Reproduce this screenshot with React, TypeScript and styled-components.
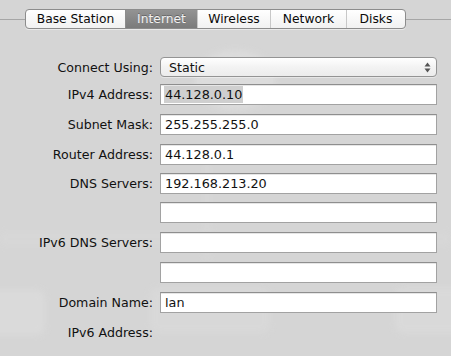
import React from "react";
import styled, { createGlobalStyle } from "styled-components";

const Global = createGlobalStyle`
  html, body { margin: 0; padding: 0; }
  body { background: #d5d5d5; font-family: "DejaVu Sans", "Lucida Grande", sans-serif; }
`;

const Page = styled.div`
  position: relative;
  width: 451px;
  height: 356px;
  overflow: hidden;
  background: #d5d5d5;
`;

const Backdrop = styled.svg`
  position: absolute;
  left: 0;
  top: 0;
  width: 451px;
  height: 356px;
  pointer-events: none;
`;

const Content = styled.div`
  position: relative;
  padding-top: 9px;
`;

const TabStrip = styled.div`
  display: flex;
  align-items: center;
  height: 20px;
  &::before, &::after {
    content: "";
    height: 1px;
    background: #a6a6a6;
    align-self: center;
  }
  &::before { width: 25px; }
  &::after { flex: 1; }
`;

const Tabs = styled.div`
  display: flex;
  height: 20px;
  border: 1px solid #8c8c8c;
  border-radius: 4px;
  overflow: hidden;
  box-sizing: border-box;
  background: linear-gradient(#ffffff, #f1f1f1);
  box-shadow: 0 1px 0 rgba(255,255,255,0.5);
`;

const Tab = styled.div<{ $active?: boolean; $w: number; $last?: boolean }>`
  width: ${p => p.$w}px;
  display: flex;
  align-items: center;
  justify-content: center;
  font-size: 12.3px;
  color: ${p => (p.$active ? "#f2f2f2" : "#0a0a0a")};
  background: ${p => (p.$active ? "linear-gradient(#939393, #7b7b7b)" : "transparent")};
  text-shadow: ${p => (p.$active ? "0 -1px 0 rgba(0,0,0,0.3)" : "none")};
  border-right: ${p => (p.$last ? "none" : "1px solid #c8c8c8")};
  box-sizing: border-box;
  &:first-child { border-right-color: #8c8c8c; }
`;

const Form = styled.div`
  display: grid;
  grid-template-columns: 153px 277px;
  column-gap: 7px;
  margin-top: 28px;
`;

const Label = styled.div<{ $gap: number }>`
  height: 21px;
  margin-bottom: ${p => p.$gap}px;
  display: flex;
  align-items: center;
  justify-content: flex-end;
  font-size: 12.6px;
  color: #111;
  white-space: nowrap;
`;

const Popup = styled.div`
  height: 20px;
  margin-bottom: 7px;
  box-sizing: border-box;
  border: 1px solid #949494;
  border-radius: 4px;
  background: linear-gradient(#ffffff, #f3f3f3 50%, #ececec);
  box-shadow: 0 1px 0 rgba(255,255,255,0.4);
  display: flex;
  align-items: center;
  justify-content: space-between;
  padding: 0 5px 0 8px;
  font-size: 12.6px;
  color: #111;
`;

const Arrows = styled.svg`
  width: 7px;
  height: 11px;
`;

const Field = styled.div<{ $gap: number }>`
  height: 21px;
  margin-bottom: ${p => p.$gap}px;
  box-sizing: border-box;
  border: 1px solid #a2a2a2;
  border-top-color: #8e8e8e;
  background: #fff;
  box-shadow: inset 0 1px 0 #e6e6e6;
  display: flex;
  align-items: center;
  padding-left: 3px;
  font-size: 12.8px;
  color: #111;
`;

const Selected = styled.span`
  background: #cfcfcf;
  padding: 1px 1px;
`;

const Plain = styled.span`
  padding-left: 1px;
`;

const Empty = styled.div`
  height: 21px;
`;

const tabs = [
  { name: "Base Station", w: 100 },
  { name: "Internet", w: 72, active: true },
  { name: "Wireless", w: 73 },
  { name: "Network", w: 76 },
  { name: "Disks", w: 58 },
];

const rows: { label: string; value?: string; selected?: boolean }[] = [
  { label: "IPv4 Address:", value: "44.128.0.10", selected: true },
  { label: "Subnet Mask:", value: "255.255.255.0" },
  { label: "Router Address:", value: "44.128.0.1" },
  { label: "DNS Servers:", value: "192.168.213.20" },
  { label: "", value: "" },
  { label: "IPv6 DNS Servers:", value: "" },
  { label: "", value: "" },
  { label: "Domain Name:", value: "lan" },
];

export default function App() {
  const gaps = [9, 9, 8, 8, 9, 9, 9, 9];
  return (
    <Page>
      <Global />
      <Backdrop viewBox="0 0 451 356">
        <defs>
          <filter id="blur"><feGaussianBlur stdDeviation="3" /></filter>
        </defs>
        <g filter="url(#blur)" opacity="0.55">
          <ellipse cx="235" cy="80" rx="40" ry="30" fill="#e2e2e2" />
          <rect x="-20" y="290" width="65" height="45" rx="8" fill="#dfdfdf" />
          <rect x="150" y="288" width="120" height="45" rx="8" fill="#dcdcdc" />
          <rect x="395" y="288" width="70" height="45" rx="8" fill="#dedede" />
          <rect x="205" y="160" width="4" height="100" fill="#dcdcdc" />
          <rect x="0" y="232" width="451" height="14" fill="#d9d9d9" />
        </g>
      </Backdrop>
      <Content>
        <TabStrip>
          <Tabs>
            {tabs.map((t, i) => (
              <Tab key={t.name} $w={t.w} $active={t.active} $last={i === tabs.length - 1}>
                {t.name}
              </Tab>
            ))}
          </Tabs>
        </TabStrip>
        <Form>
          <Label $gap={7} style={{ height: 20 }}>Connect Using:</Label>
          <Popup>
            <span>Static</span>
            <Arrows viewBox="0 0 7 11">
              <path d="M3.5 0.5 L6.5 4.5 H0.5 Z" fill="#555" />
              <path d="M3.5 10.5 L6.5 6.5 H0.5 Z" fill="#555" />
            </Arrows>
          </Popup>
          {rows.map((r, i) => (
            <React.Fragment key={i}>
              <Label $gap={gaps[i]}>{r.label}</Label>
              <Field $gap={gaps[i]}>
                {r.selected ? <Selected>{r.value}</Selected> : <Plain>{r.value}</Plain>}
              </Field>
            </React.Fragment>
          ))}
          <Label $gap={0}>IPv6 Address:</Label>
          <Empty />
        </Form>
      </Content>
    </Page>
  );
}
